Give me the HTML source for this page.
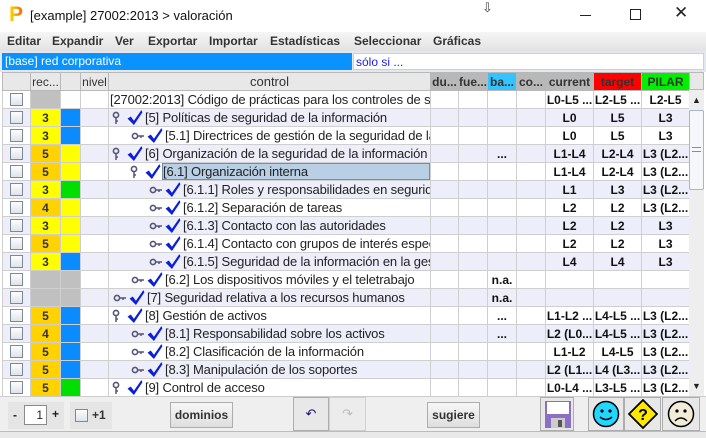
<!DOCTYPE html>
<html><head><meta charset="utf-8">
<style>
*{box-sizing:border-box;margin:0;padding:0}
body{width:706px;height:438px;overflow:hidden;background:#e9e9e9;font-family:"Liberation Sans",Arial,sans-serif;font-size:12px;position:relative;color:#222}
.abs{position:absolute}
#title{left:0;top:0;width:706px;height:32px;background:#fff}
#menu{left:0;top:32px;width:706px;height:19px;background:linear-gradient(#f6f6f6,#e2e2e2);font-weight:bold;color:#333}
#menu span{position:absolute;top:2px}
table{border-collapse:collapse;table-layout:fixed;position:absolute;left:2px;top:72px;width:687px;background:#fff}
td{height:18px;border:1px solid #cfcfcf;white-space:nowrap;overflow:hidden;padding:0;font-size:12px}
tr.h td{background:#e8e8e8;text-align:center;color:#333;border-color:#b8b8b8}
tr.a td{background:#eeeefb}
td.c{text-align:center;font-weight:bold;color:#111}
td.r{text-align:center;font-weight:bold;color:#333}
.y{background:#ffff00!important}.o{background:#ffd200!important}.b{background:#0a8cff!important}.g{background:#00e000!important}.gr{background:#c0c0c0!important}.yy{background:#ffff00!important}
.cb{display:block;margin:0 auto;width:13px;height:13px;border:1px solid #7a8a99;background:linear-gradient(#fdfdfd,#dfe3e8)}
.ct{display:flex;align-items:center;height:17px;color:#222;font-size:13px;letter-spacing:-0.15px}
.ct svg{flex:none}
.sel{background:#b8cfe5;border:1px solid #6f8fb0;height:17px;flex:1;line-height:15px}
</style></head><body>
<div id="title" class="abs">
 <div class="abs" style="left:9px;top:5px;font:bold 21px 'Liberation Sans';line-height:20px;background:linear-gradient(90deg,#ffe000,#ff6000);-webkit-background-clip:text;color:transparent">P</div>
 <div class="abs" style="left:30px;top:8px;font-size:13px;color:#111">[example] 27002:2013 &gt; valoración</div>
 <div class="abs" style="left:580px;top:15px;width:11px;height:1px;background:#222"></div>
 <div class="abs" style="left:630px;top:9px;width:11px;height:11px;border:1px solid #222"></div>
 <div class="abs" style="left:674px;top:3px;font-size:17px;color:#222">✕</div>
 <div class="abs" style="left:482px;top:0;font-size:13px;color:#444">⇩</div>
</div>
<div id="menu" class="abs">
<span style="left:7px">Editar</span><span style="left:52px">Expandir</span><span style="left:115px">Ver</span><span style="left:148px">Exportar</span><span style="left:209px">Importar</span><span style="left:270px">Estadísticas</span><span style="left:354px">Seleccionar</span><span style="left:433px">Gráficas</span>
</div>
<div class="abs" style="left:0;top:51px;width:706px;height:21px;background:#e4e8ee"></div>
<div class="abs" style="left:2px;top:53px;width:350px;height:17px;background:#0a93ff;color:#fff;padding:1px 3px;font-size:12px">[base] red corporativa</div>
<div class="abs" style="left:353px;top:53px;width:351px;height:17px;background:#fff;border:1px solid #c7d2de;color:#1d1df0;padding:1px 2px;font-size:12px">sólo si ...</div>
<div class="abs" style="left:0;top:72px;width:706px;height:324px;background:#fff"></div>

<svg width="0" height="0" style="position:absolute">
<defs>
<symbol id="ck" viewBox="0 0 16 16"><path d="M1 9 L4 7 L7 11 L14 1 L15 3 L7 15 Z" fill="#0a1fd6"/></symbol>
<symbol id="kv" viewBox="0 0 10 14"><circle cx="5" cy="4" r="2.6" fill="none" stroke="#557" stroke-width="1.6"/><path d="M5 6.5V13M5 10h2" stroke="#557" stroke-width="1.5"/></symbol>
<symbol id="kh" viewBox="0 0 14 10"><circle cx="4" cy="5" r="2.6" fill="none" stroke="#557" stroke-width="1.6"/><path d="M6.5 5H13M10 5v2" stroke="#557" stroke-width="1.5"/></symbol>
</defs></svg>

<table>
<colgroup><col style="width:28px"><col style="width:30px"><col style="width:20px"><col style="width:28px"><col style="width:322px"><col style="width:28px"><col style="width:29px"><col style="width:29px"><col style="width:29px"><col style="width:48px"><col style="width:48px"><col style="width:48px"></colgroup>
<tr class="h"><td></td><td>rec...</td><td></td><td>nivel</td><td style="font-size:13px">control</td><td style="background:#b8b8b8;font-weight:bold">du...</td><td style="background:#b8b8b8;font-weight:bold">fue...</td><td style="background:#33c4ff;font-weight:bold">ba...</td><td style="background:#b8b8b8;font-weight:bold">co...</td><td style="background:#b8b8b8;font-weight:bold">current</td><td style="background:#ff0000;font-weight:bold">target</td><td style="background:#00f000;font-weight:bold">PILAR</td></tr>
<tr><td><i class="cb"></i></td><td class="gr"></td><td></td><td></td><td><div class="ct" style="padding-left:1px">[27002:2013] Código de prácticas para los controles de seguridad</div></td><td></td><td></td><td></td><td></td><td class="c">L0-L5 ...</td><td class="c">L2-L5 ...</td><td class="c">L2-L5</td></tr>
<tr class="a"><td><i class="cb"></i></td><td class="r y">3</td><td class="b"></td><td></td><td><div class="ct" style="padding-left:2px"><svg width="10" height="14"><use href="#kv"/></svg><svg width="18" height="17" style="margin-left:5px"><use href="#ck"/></svg><span style="margin-left:1px">[5] Políticas de seguridad de la información</span></div></td><td></td><td></td><td></td><td></td><td class="c">L0</td><td class="c">L5</td><td class="c">L3</td></tr>
<tr><td><i class="cb"></i></td><td class="r y">3</td><td class="b"></td><td></td><td><div class="ct" style="padding-left:22px"><svg width="14" height="10"><use href="#kh"/></svg><svg width="18" height="17" style="margin-left:1px"><use href="#ck"/></svg><span style="margin-left:1px">[5.1] Directrices de gestión de la seguridad de la información</span></div></td><td></td><td></td><td></td><td></td><td class="c">L0</td><td class="c">L5</td><td class="c">L3</td></tr>
<tr class="a"><td><i class="cb"></i></td><td class="r o">5</td><td class="yy"></td><td></td><td><div class="ct" style="padding-left:2px"><svg width="10" height="14"><use href="#kv"/></svg><svg width="18" height="17" style="margin-left:5px"><use href="#ck"/></svg><span style="margin-left:1px">[6] Organización de la seguridad de la información</span></div></td><td></td><td></td><td class="c">...</td><td></td><td class="c">L1-L4</td><td class="c">L2-L4</td><td class="c">L3 (L2...</td></tr>
<tr><td><i class="cb"></i></td><td class="r o">5</td><td class="yy"></td><td></td><td><div class="ct" style="padding-left:20px"><svg width="10" height="14"><use href="#kv"/></svg><svg width="18" height="17" style="margin-left:5px"><use href="#ck"/></svg><span class="sel">[6.1] Organización interna</span></div></td><td></td><td></td><td></td><td></td><td class="c">L1-L4</td><td class="c">L2-L4</td><td class="c">L3 (L2...</td></tr>
<tr class="a"><td><i class="cb"></i></td><td class="r y">3</td><td class="g"></td><td></td><td><div class="ct" style="padding-left:40px"><svg width="14" height="10"><use href="#kh"/></svg><svg width="18" height="17" style="margin-left:1px"><use href="#ck"/></svg><span style="margin-left:1px">[6.1.1] Roles y responsabilidades en seguridad de la información</span></div></td><td></td><td></td><td></td><td></td><td class="c">L1</td><td class="c">L3</td><td class="c">L3 (L2...</td></tr>
<tr><td><i class="cb"></i></td><td class="r o">4</td><td class="yy"></td><td></td><td><div class="ct" style="padding-left:40px"><svg width="14" height="10"><use href="#kh"/></svg><svg width="18" height="17" style="margin-left:1px"><use href="#ck"/></svg><span style="margin-left:1px">[6.1.2] Separación de tareas</span></div></td><td></td><td></td><td></td><td></td><td class="c">L2</td><td class="c">L2</td><td class="c">L3 (L2...</td></tr>
<tr class="a"><td><i class="cb"></i></td><td class="r y">3</td><td class="yy"></td><td></td><td><div class="ct" style="padding-left:40px"><svg width="14" height="10"><use href="#kh"/></svg><svg width="18" height="17" style="margin-left:1px"><use href="#ck"/></svg><span style="margin-left:1px">[6.1.3] Contacto con las autoridades</span></div></td><td></td><td></td><td></td><td></td><td class="c">L2</td><td class="c">L2</td><td class="c">L3</td></tr>
<tr><td><i class="cb"></i></td><td class="r o">5</td><td class="yy"></td><td></td><td><div class="ct" style="padding-left:40px"><svg width="14" height="10"><use href="#kh"/></svg><svg width="18" height="17" style="margin-left:1px"><use href="#ck"/></svg><span style="margin-left:1px">[6.1.4] Contacto con grupos de interés especial</span></div></td><td></td><td></td><td></td><td></td><td class="c">L2</td><td class="c">L2</td><td class="c">L3</td></tr>
<tr class="a"><td><i class="cb"></i></td><td class="r y">3</td><td class="b"></td><td></td><td><div class="ct" style="padding-left:40px"><svg width="14" height="10"><use href="#kh"/></svg><svg width="18" height="17" style="margin-left:1px"><use href="#ck"/></svg><span style="margin-left:1px">[6.1.5] Seguridad de la información en la gestión de proyectos</span></div></td><td></td><td></td><td></td><td></td><td class="c">L4</td><td class="c">L4</td><td class="c">L3</td></tr>
<tr><td><i class="cb"></i></td><td class="gr"></td><td class="gr"></td><td></td><td><div class="ct" style="padding-left:22px"><svg width="14" height="10"><use href="#kh"/></svg><svg width="18" height="17" style="margin-left:1px"><use href="#ck"/></svg><span style="margin-left:1px">[6.2] Los dispositivos móviles y el teletrabajo</span></div></td><td></td><td></td><td class="c">n.a.</td><td></td><td></td><td></td><td></td></tr>
<tr class="a"><td><i class="cb"></i></td><td class="gr"></td><td class="gr"></td><td></td><td><div class="ct" style="padding-left:4px"><svg width="14" height="10"><use href="#kh"/></svg><svg width="18" height="17" style="margin-left:1px"><use href="#ck"/></svg><span style="margin-left:1px">[7] Seguridad relativa a los recursos humanos</span></div></td><td></td><td></td><td class="c">n.a.</td><td></td><td></td><td></td><td></td></tr>
<tr><td><i class="cb"></i></td><td class="r o">5</td><td class="b"></td><td></td><td><div class="ct" style="padding-left:2px"><svg width="10" height="14"><use href="#kv"/></svg><svg width="18" height="17" style="margin-left:5px"><use href="#ck"/></svg><span style="margin-left:1px">[8] Gestión de activos</span></div></td><td></td><td></td><td class="c">...</td><td></td><td class="c">L1-L2 ...</td><td class="c">L4-L5 ...</td><td class="c">L3 (L2...</td></tr>
<tr class="a"><td><i class="cb"></i></td><td class="r o">4</td><td class="b"></td><td></td><td><div class="ct" style="padding-left:22px"><svg width="14" height="10"><use href="#kh"/></svg><svg width="18" height="17" style="margin-left:1px"><use href="#ck"/></svg><span style="margin-left:1px">[8.1] Responsabilidad sobre los activos</span></div></td><td></td><td></td><td class="c">...</td><td></td><td class="c">L2 (L0...</td><td class="c">L4-L5 ...</td><td class="c">L3 (L2...</td></tr>
<tr><td><i class="cb"></i></td><td class="r o">5</td><td class="b"></td><td></td><td><div class="ct" style="padding-left:22px"><svg width="14" height="10"><use href="#kh"/></svg><svg width="18" height="17" style="margin-left:1px"><use href="#ck"/></svg><span style="margin-left:1px">[8.2] Clasificación de la información</span></div></td><td></td><td></td><td></td><td></td><td class="c">L1-L2</td><td class="c">L4-L5</td><td class="c">L3 (L2...</td></tr>
<tr class="a"><td><i class="cb"></i></td><td class="r o">5</td><td class="b"></td><td></td><td><div class="ct" style="padding-left:22px"><svg width="14" height="10"><use href="#kh"/></svg><svg width="18" height="17" style="margin-left:1px"><use href="#ck"/></svg><span style="margin-left:1px">[8.3] Manipulación de los soportes</span></div></td><td></td><td></td><td></td><td></td><td class="c">L2 (L1...</td><td class="c">L4 (L3...</td><td class="c">L3 (L2...</td></tr>
<tr><td><i class="cb"></i></td><td class="r o">5</td><td class="g"></td><td></td><td><div class="ct" style="padding-left:2px"><svg width="10" height="14"><use href="#kv"/></svg><svg width="18" height="17" style="margin-left:5px"><use href="#ck"/></svg><span style="margin-left:1px">[9] Control de acceso</span></div></td><td></td><td></td><td></td><td></td><td class="c">L0-L4 ...</td><td class="c">L3-L5 ...</td><td class="c">L3 (L2...</td></tr>
</table>

<!-- scrollbar -->
<div class="abs" style="left:689px;top:72px;width:15px;height:18px;background:#e8e8e8;border:1px solid #b8b8b8"></div>
<div class="abs" style="left:689px;top:90px;width:15px;height:306px;background:#eeeeee"></div>
<div class="abs" style="left:689px;top:91px;width:15px;height:18px;color:#222;font-size:9px;text-align:center;line-height:18px">▲</div>
<div class="abs" style="left:689px;top:110px;width:15px;height:80px;background:#f6f7fa;border:1px solid #a9b6c7;border-radius:2px"></div>
<div class="abs" style="left:692px;top:147px;width:9px;height:5px;border-top:1px solid #8090a0;border-bottom:1px solid #8090a0"></div>
<div class="abs" style="left:689px;top:378px;width:15px;height:17px;color:#222;font-size:9px;text-align:center;line-height:17px">▼</div>

<!-- bottom panel -->
<div class="abs" style="left:0;top:396px;width:706px;height:36px;background:#efefef;border-top:1px solid #ccc;border-bottom:1px solid #bbb"></div>
<div class="abs" style="left:8px;top:402px;width:56px;height:27px;background:#e5e5e5"></div>
<div class="abs" style="left:13px;top:408px;font-weight:bold;font-size:12px">-</div>
<div class="abs" style="left:24px;top:405px;width:23px;height:20px;background:#fff;border:1px solid #8a8a8a;text-align:right;padding:2px 3px;font-size:12px">1</div>
<div class="abs" style="left:52px;top:407px;font-weight:bold">+</div>
<div class="abs" style="left:70px;top:402px;width:42px;height:27px;background:#e5e5e5"></div>
<i class="cb abs" style="left:75px;top:409px"></i>
<div class="abs" style="left:92px;top:408px;font-weight:bold;color:#333">+1</div>
<div class="abs" style="left:170px;top:402px;width:63px;height:26px;border:1px solid #adadad;background:linear-gradient(#f7f7f7,#dedede);font-weight:bold;text-align:center;line-height:24px;color:#333">dominios</div>
<div class="abs" style="left:293px;top:397px;width:36px;height:34px;border:1px solid #adadad;background:#e8e8e8;text-align:center;line-height:32px;font-size:13px;color:#14146e">↶</div>
<div class="abs" style="left:329px;top:397px;width:37px;height:34px;border:1px solid #d0d0d0;background:#ececec;text-align:center;line-height:32px;font-size:13px;color:#bbb">↷</div>
<div class="abs" style="left:427px;top:402px;width:53px;height:26px;border:1px solid #adadad;background:linear-gradient(#f7f7f7,#dedede);font-weight:bold;text-align:center;line-height:24px;color:#333">sugiere</div>
<div class="abs" style="left:540px;top:397px;width:34px;height:34px;border:1px solid #adadad;background:#e8e8e8"></div>
<svg class="abs" style="left:545px;top:401px" width="26" height="27"><rect x="0" y="0" width="26" height="27" fill="#8a6fc4"/><rect x="2" y="1" width="22" height="12" fill="#fff"/><rect x="6" y="17" width="14" height="10" fill="#ccc"/><rect x="13" y="19" width="4" height="7" fill="#555"/></svg>
<div class="abs" style="left:588px;top:397px;width:36px;height:34px;border:1px solid #adadad;background:#e8e8e8"></div>
<svg class="abs" style="left:591px;top:400px" width="30" height="28"><circle cx="15" cy="14" r="12.5" fill="#20d8ff" stroke="#000" stroke-width="1.5"/><circle cx="11" cy="11" r="1.6"/><circle cx="19" cy="11" r="1.6"/><path d="M9 17 Q15 22 21 17" fill="none" stroke="#000" stroke-width="1.5"/></svg>
<div class="abs" style="left:624px;top:397px;width:37px;height:34px;border:1px solid #adadad;background:#e8e8e8"></div>
<svg class="abs" style="left:628px;top:399px" width="30" height="30"><path d="M15 1 L29 15 L15 29 L1 15 Z" fill="#ffe800" stroke="#000" stroke-width="1.8"/><text x="15" y="21" text-anchor="middle" font-family="Liberation Sans" font-weight="bold" font-size="16">?</text></svg>
<div class="abs" style="left:662px;top:397px;width:38px;height:34px;border:1px solid #adadad;background:#e8e8e8"></div>
<svg class="abs" style="left:666px;top:400px" width="30" height="28"><circle cx="15" cy="14" r="12.5" fill="#f0ecd8" stroke="#000" stroke-width="1.5"/><circle cx="11" cy="11" r="1.6"/><circle cx="19" cy="11" r="1.6"/><path d="M9 21 Q15 15 21 21" fill="none" stroke="#000" stroke-width="1.5"/></svg>
</body></html>
